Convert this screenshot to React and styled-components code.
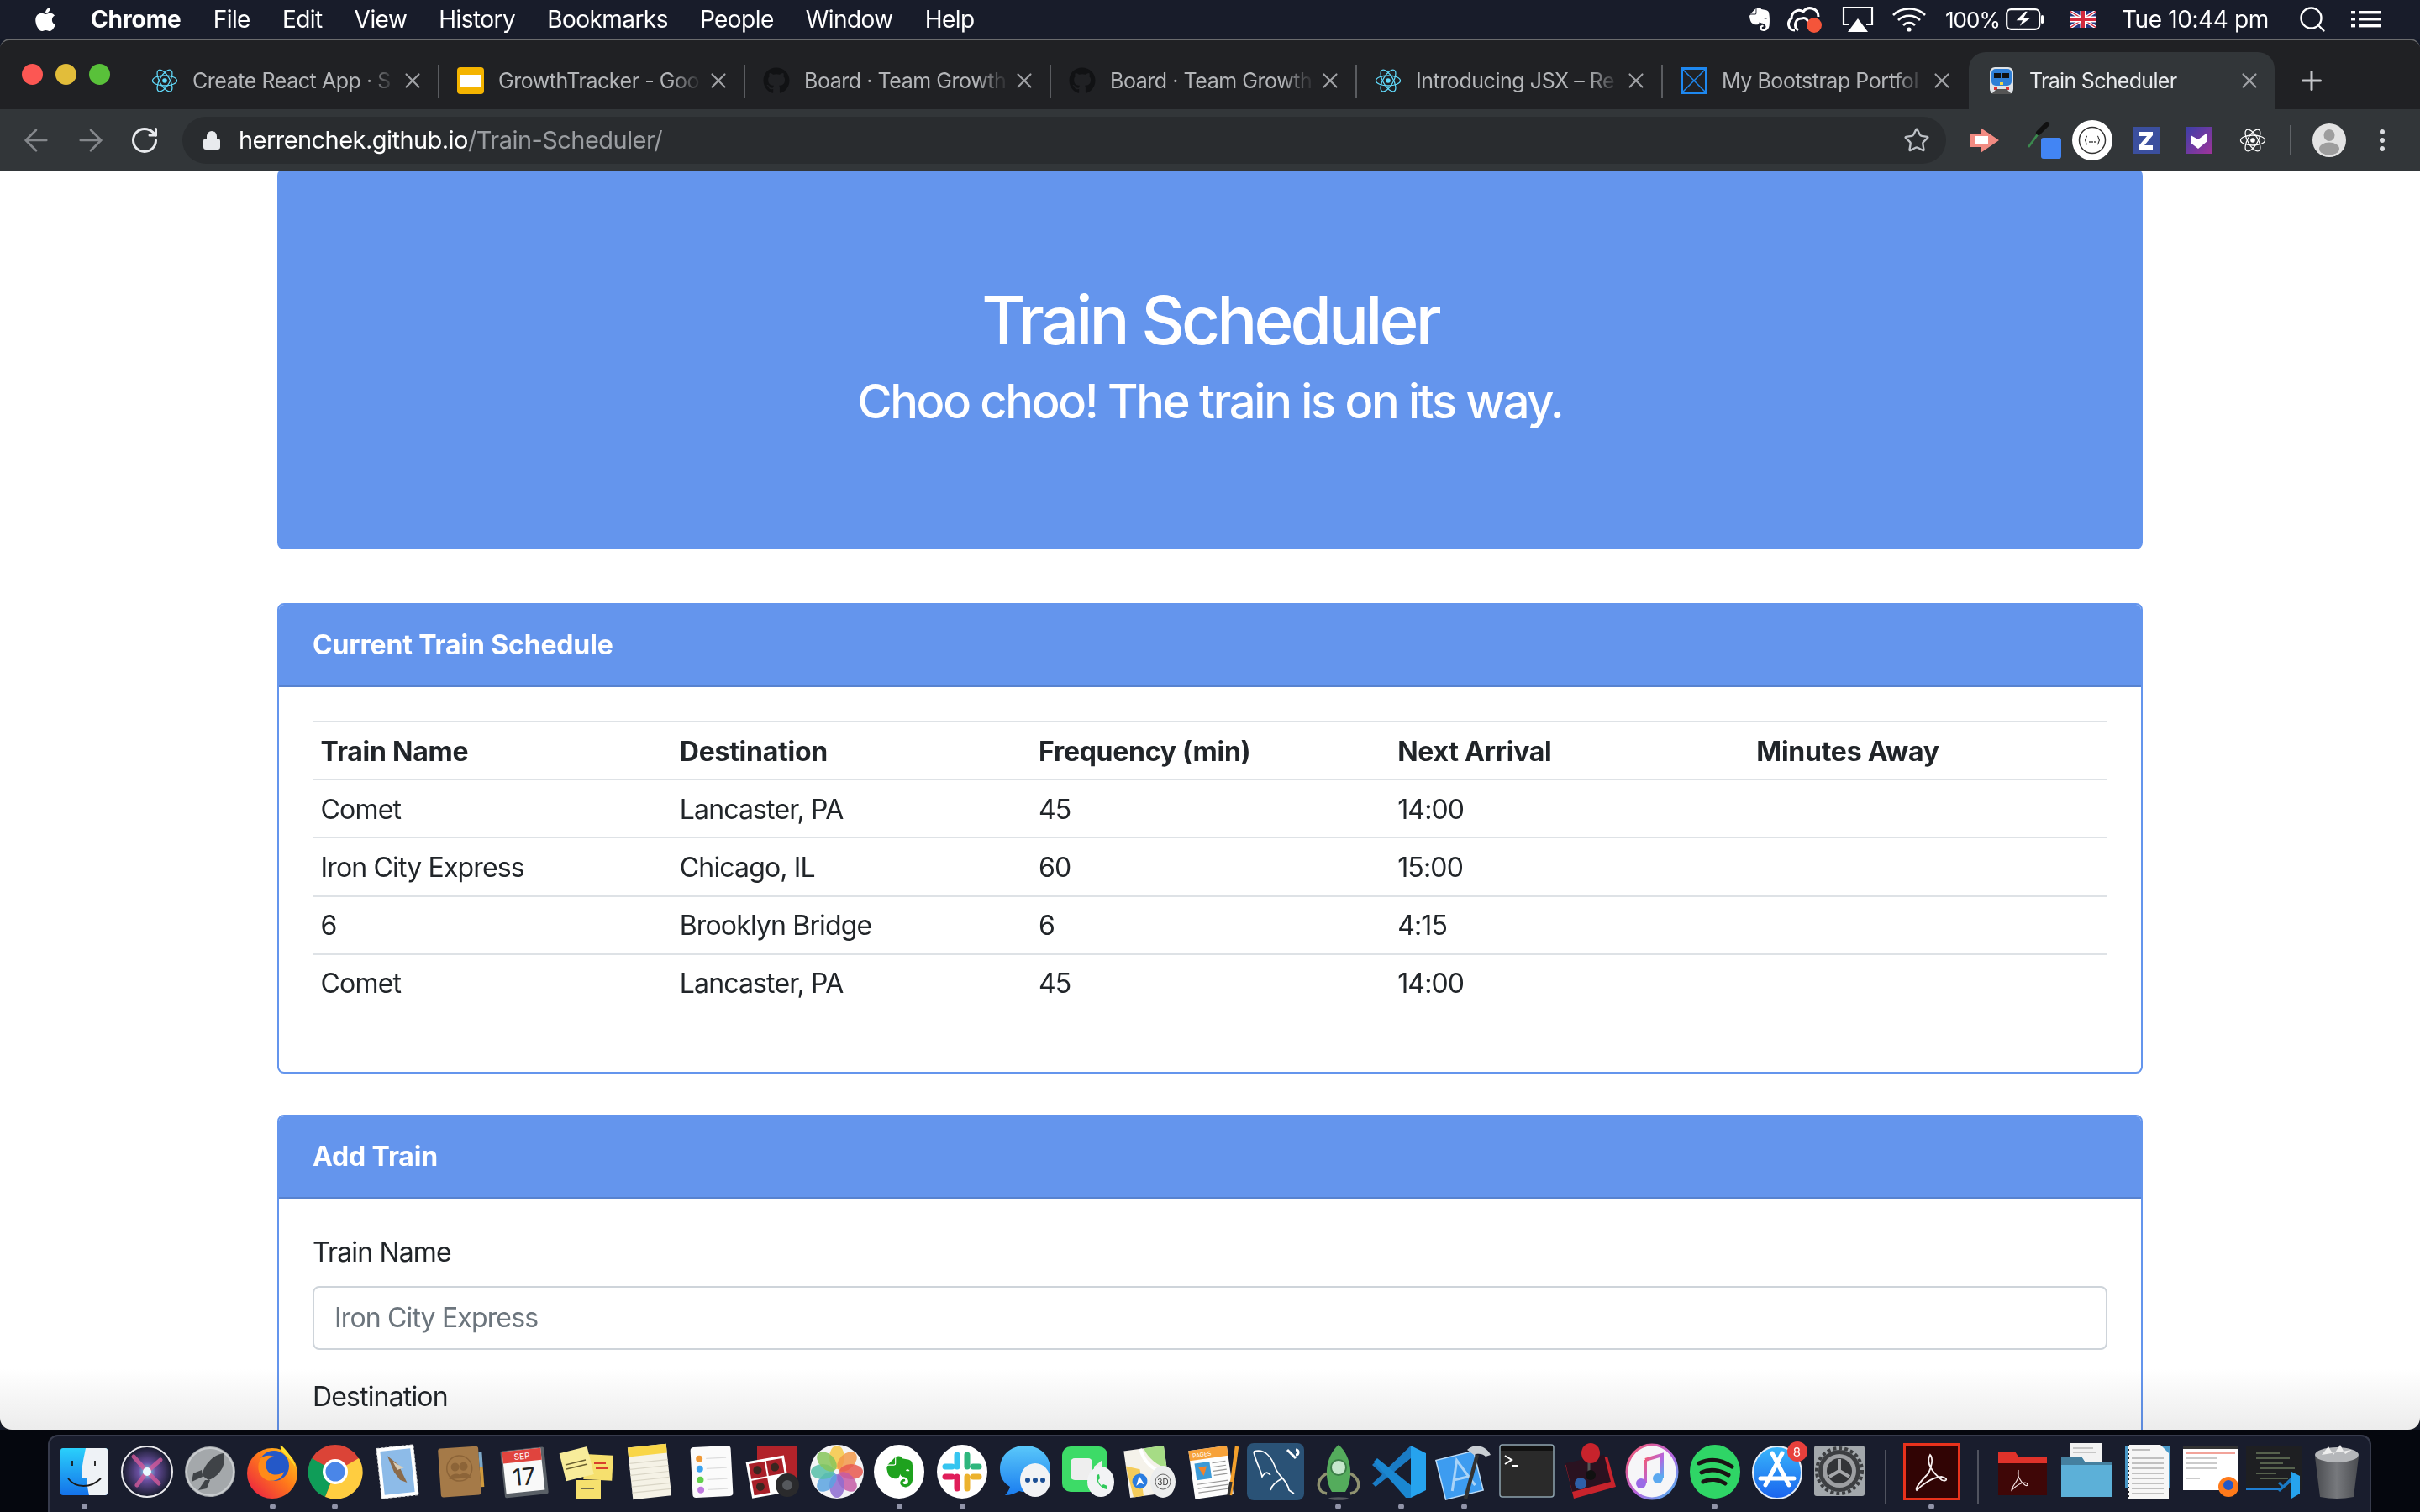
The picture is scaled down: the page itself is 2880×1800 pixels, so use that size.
import React from "react";
import styled, { createGlobalStyle } from "styled-components";
import { ArrowLeft, ArrowRight, RotateCw, Star, X, Plus, Search, Lock } from "lucide-react";
import { FaApple, FaGithub, FaEvernote } from "react-icons/fa";

const BLUE = "#6495ed";

const GlobalStyle = createGlobalStyle`
  html, body { margin: 0; padding: 0; background: #141927; }
  body { font-family: Inter, "Liberation Sans", sans-serif; color: #212529; width: 2880px; height: 1800px; overflow: hidden; }
  * { box-sizing: border-box; }
`;

/* ---------- small drawings ---------- */

const ReactLogo = ({ size = 32, color = "#61dafb" }) => (
  <svg width={size} height={size} viewBox="0 0 32 32" fill="none" stroke={color} strokeWidth="1.3">
    <ellipse cx="16" cy="16" rx="14.5" ry="6" />
    <ellipse cx="16" cy="16" rx="14.5" ry="6" transform="rotate(60 16 16)" />
    <ellipse cx="16" cy="16" rx="14.5" ry="6" transform="rotate(120 16 16)" />
    <circle cx="16" cy="16" r="2.8" fill={color} stroke="none" />
  </svg>
);

const SlidesFav = () => (
  <svg width="32" height="32" viewBox="0 0 32 32">
    <rect width="32" height="32" rx="4" fill="#f4b400" />
    <rect x="4" y="9" width="24" height="14" fill="#fff" />
  </svg>
);

const PortfolioFav = () => (
  <svg width="32" height="32" viewBox="0 0 32 32" fill="none" stroke="#1e88f0">
    <rect x="1.5" y="1.5" width="29" height="29" strokeWidth="3" />
    <path d="M2 2 L30 30 M30 2 L2 30" strokeWidth="1.5" />
  </svg>
);

const TrainFav = () => (
  <svg width="32" height="34" viewBox="0 0 32 34">
    <rect x="2" y="1" width="28" height="32" rx="6" fill="#dfe3e6" />
    <rect x="4" y="3" width="24" height="20" rx="5" fill="#2f7fd6" />
    <rect x="7" y="8" width="8" height="6" fill="#111" />
    <rect x="17" y="8" width="8" height="6" fill="#111" />
    <rect x="7" y="25" width="4" height="3" fill="#d33" />
    <rect x="21" y="25" width="4" height="3" fill="#d33" />
    <rect x="14" y="19" width="4" height="3" fill="#f0d84a" />
    <path d="M4 33 L10 27 H22 L28 33 Z" fill="#555" />
  </svg>
);

const CloudStatus = () => (
  <svg width="44" height="34" viewBox="0 0 44 34" fill="none" stroke="#fff" strokeWidth="3">
    <path d="M10 30 C2 30 0 20 6 16 C6 8 14 4 20 8 C26 0 38 4 38 14" />
    <path d="M14 30 C8 26 10 16 18 16 C24 14 28 20 26 28" />
    <circle cx="33" cy="24" r="9" fill="#f4553a" stroke="none" />
  </svg>
);

const AirplayStatus = () => (
  <svg width="38" height="32" viewBox="0 0 38 32">
    <path d="M9 22 H2 V2 H36 V22 H29" fill="none" stroke="#fff" strokeWidth="2.2" />
    <path d="M19 15 L31 31 H7 Z" fill="#fff" />
  </svg>
);

const WifiStatus = () => (
  <svg width="42" height="30" viewBox="0 0 42 30" fill="none" stroke="#fff" strokeWidth="2.6">
    <path d="M2 10 C12 0 30 0 40 10" />
    <path d="M8 16 C15 9 27 9 34 16" />
    <path d="M14 22 C18 18 24 18 28 22" />
    <circle cx="21" cy="27" r="2.6" fill="#fff" stroke="none" />
  </svg>
);

const BatteryStatus = () => (
  <svg width="46" height="26" viewBox="0 0 46 26">
    <rect x="1.2" y="1.2" width="39" height="23.6" rx="5" fill="none" stroke="#fff" strokeWidth="2.2" />
    <rect x="42" y="8" width="3" height="10" rx="1.5" fill="#fff" />
    <path d="M23 3 L11 15 H19 L15 23 L31 11 H22 L27 3 Z" fill="#fff" stroke="#1a1e2c" strokeWidth="1.4" />
  </svg>
);

const FlagStatus = () => (
  <svg width="32" height="20" viewBox="0 0 32 20">
    <rect width="32" height="20" fill="#24357d" />
    <path d="M0 0 L32 20 M32 0 L0 20" stroke="#fff" strokeWidth="4" />
    <path d="M0 0 L32 20 M32 0 L0 20" stroke="#d3293d" strokeWidth="1.4" />
    <path d="M16 0 V20 M0 10 H32" stroke="#fff" strokeWidth="7" />
    <path d="M16 0 V20 M0 10 H32" stroke="#d3293d" strokeWidth="4" />
  </svg>
);

const ListStatus = () => (
  <svg width="36" height="20" viewBox="0 0 36 20" fill="#fff">
    <rect y="0" width="5" height="3.4" /><rect x="9" y="0" width="27" height="3.4" />
    <rect y="8" width="5" height="3.4" /><rect x="9" y="8" width="27" height="3.4" />
    <rect y="16" width="5" height="3.4" /><rect x="9" y="16" width="27" height="3.4" />
  </svg>
);

const RecExt = () => (
  <svg width="34" height="30" viewBox="0 0 34 30">
    <path d="M12 0 L34 15 L12 30 V23 H0 V7 H12 Z" fill="#f28b82" />
    <rect x="5" y="10" width="16" height="10" fill="#fff" />
  </svg>
);

const DropperExt = () => (
  <svg width="44" height="44" viewBox="0 0 44 44">
    <path d="M3 30 L17 11" stroke="#3b8a4e" strokeWidth="2.6" />
    <path d="M15 13 L25 3" stroke="#111" strokeWidth="6" strokeLinecap="round" />
    <rect x="18" y="19" width="24" height="25" rx="3" fill="#4285f4" />
  </svg>
);

const JsonExt = () => (
  <svg width="48" height="48" viewBox="0 0 48 48">
    <circle cx="24" cy="24" r="24" fill="#fff" />
    <circle cx="24" cy="24" r="15.5" fill="none" stroke="#333" strokeWidth="1.5" />
    <path d="M18 19 C16 19 17 24 15 24 C17 24 16 29 18 29 M30 19 C32 19 31 24 33 24 C31 24 32 29 30 29" fill="none" stroke="#333" strokeWidth="1.2" />
    <circle cx="21" cy="26" r="0.9" fill="#333" /><circle cx="24" cy="26" r="0.9" fill="#333" /><circle cx="27" cy="26" r="0.9" fill="#333" />
  </svg>
);

const ZExt = () => (
  <svg width="32" height="32" viewBox="0 0 32 32">
    <rect width="32" height="32" fill="#3b4f9e" />
    <path d="M8 6 H24 V10 L14 22 H24 V27 H7 V23 L17 11 H8 Z" fill="#fff" />
  </svg>
);

const CheckExt = () => (
  <svg width="32" height="32" viewBox="0 0 32 32">
    <defs>
      <linearGradient id="chk" x1="0" x2="1" y1="0" y2="1">
        <stop offset="0" stopColor="#3b3fa8" /><stop offset="1" stopColor="#a0349a" />
      </linearGradient>
    </defs>
    <rect width="32" height="32" fill="url(#chk)" />
    <path d="M6 10 L15 15 L26 7 V17 L15 26 L6 19 Z" fill="#fff" />
  </svg>
);

const Avatar = () => (
  <svg width="40" height="40" viewBox="0 0 40 40">
    <circle cx="20" cy="20" r="20" fill="#e3e3e3" />
    <ellipse cx="20" cy="14" rx="6.5" ry="7" fill="#9e9e9e" />
    <ellipse cx="20" cy="30" rx="12" ry="7.5" fill="#9e9e9e" />
  </svg>
);

const Dots = () => (
  <svg width="8" height="28" viewBox="0 0 8 28" fill="#dadce0">
    <circle cx="4" cy="4" r="3" /><circle cx="4" cy="14" r="3" /><circle cx="4" cy="24" r="3" />
  </svg>
);

/* ---------- dock drawings, all on a 68 box ---------- */

const Icon = ({ children }) => (
  <svg width="68" height="68" viewBox="0 0 68 68">{children}</svg>
);

const Finder = () => (
  <Icon>
    <defs>
      <linearGradient id="fd" x1="0" x2="0" y1="0" y2="1"><stop offset="0" stopColor="#2ad0fb" /><stop offset="1" stopColor="#1472ea" /></linearGradient>
    </defs>
    <rect x="6" y="6" width="56" height="56" rx="3" fill="url(#fd)" />
    <path d="M36 6 H59 Q62 6 62 9 V59 Q62 62 59 62 H40 C38 52 37 46 38 42 H31 C31 28 34 16 36 6 Z" fill="#eef2f6" />
    <path d="M20 21 V27 M47 21 V27" stroke="#1a1a1a" strokeWidth="1.8" />
    <path d="M15 42 C24 54 42 54 54 42" fill="none" stroke="#1a1a1a" strokeWidth="1.8" />
  </Icon>
);

const Siri = () => (
  <Icon>
    <defs>
      <radialGradient id="si"><stop offset="0" stopColor="#7fe7f5" /><stop offset="0.35" stopColor="#6a4fa0" /><stop offset="1" stopColor="#151a2a" /></radialGradient>
    </defs>
    <circle cx="34" cy="34" r="30" fill="url(#si)" stroke="#e8e8ec" strokeWidth="2" />
    <path d="M34 34 L18 16 M34 34 L50 20 M34 34 L22 50 M34 34 L48 48" stroke="#d45a9b" strokeWidth="5" strokeLinecap="round" opacity="0.8" />
    <circle cx="34" cy="34" r="5" fill="#e9fbff" />
  </Icon>
);

const Launchpad = () => (
  <Icon>
    <circle cx="34" cy="34" r="30" fill="#a4a8ab" />
    <circle cx="34" cy="34" r="28" fill="none" stroke="#c9cccf" strokeWidth="2" />
    <path d="M50 12 C38 14 28 24 24 38 L32 44 C44 40 54 28 50 12 Z" fill="#3f4347" />
    <path d="M24 32 L14 36 L12 46 L25 40 Z M34 44 L30 54 L20 56 L28 44 Z" fill="#3f4347" />
  </Icon>
);

const Firefox = () => (
  <Icon>
    <defs>
      <linearGradient id="ff" x1="0" x2="1" y1="1" y2="0"><stop offset="0" stopColor="#e8134a" /><stop offset="0.55" stopColor="#ff7a1a" /><stop offset="1" stopColor="#ffd11c" /></linearGradient>
    </defs>
    <circle cx="34" cy="36" r="30" fill="url(#ff)" />
    <path d="M44 2 C42 10 52 14 60 26 C64 34 60 16 44 2 Z" fill="#ffde2e" />
    <circle cx="36" cy="27" r="18" fill="#2458c8" />
    <path d="M20 18 C28 12 36 16 36 16 C26 18 24 26 28 32 C32 40 44 38 48 34 C46 44 32 48 24 42 C16 36 16 26 20 18 Z" fill="#ff8b18" />
  </Icon>
);

const Chrome = () => (
  <Icon>
    <circle cx="34" cy="34" r="32" fill="#db4437" />
    <path d="M34 34 L6 18 A32 32 0 0 0 22 64 Z" fill="#0f9d58" />
    <path d="M34 34 L62 18 A32 32 0 0 1 22 64 Z" fill="#ffcd40" />
    <circle cx="34" cy="34" r="15" fill="#fff" />
    <circle cx="34" cy="34" r="11.5" fill="#4a86e8" />
  </Icon>
);

const Mail = () => (
  <Icon>
    <g transform="rotate(-6 34 34)">
      <rect x="12" y="4" width="44" height="60" fill="#fff" stroke="#ddd" strokeDasharray="3 2" />
      <rect x="16" y="8" width="36" height="52" fill="#8dbbe8" />
      <path d="M24 14 L36 26 L44 48 L36 44 L30 34 Z" fill="#8a6a4a" />
      <path d="M30 22 L42 30 L34 32 Z" fill="#d8cdb8" />
    </g>
  </Icon>
);

const Contacts = () => (
  <Icon>
    <g transform="rotate(-4 34 34)">
      <rect x="9" y="5" width="48" height="58" rx="3" fill="#a57a48" />
      <rect x="57" y="12" width="4" height="18" fill="#7da9c9" /><rect x="57" y="30" width="4" height="24" fill="#d09a3d" />
      <circle cx="33" cy="30" r="15" fill="none" stroke="#8c6438" strokeWidth="1.5" />
      <circle cx="28" cy="28" r="5" fill="#8c6438" /><circle cx="38" cy="28" r="5" fill="#8c6438" />
      <path d="M20 42 C22 34 34 34 36 42 Z M30 42 C32 34 44 34 46 42 Z" fill="#8c6438" />
    </g>
  </Icon>
);

const Calendar = () => (
  <Icon>
    <g transform="rotate(-6 34 34)">
      <rect x="9" y="7" width="52" height="56" rx="2" fill="#5a6067" />
      <rect x="11" y="8" width="46" height="50" fill="#f9f9f9" />
      <rect x="11" y="8" width="46" height="14" fill="#e0443e" />
      <text x="34" y="19" fontFamily="Inter, sans-serif" fontSize="10" fill="#fff" textAnchor="middle">SEP</text>
      <text x="34" y="50" fontFamily="Inter, sans-serif" fontSize="28" fill="#222" textAnchor="middle">17</text>
    </g>
  </Icon>
);

const Stickies = () => (
  <Icon>
    <rect x="32" y="14" width="34" height="30" fill="#f6e06e" transform="rotate(3 50 30)" />
    <rect x="22" y="44" width="30" height="22" fill="#f6e06e" />
    <rect x="6" y="8" width="34" height="34" fill="#f8ec9a" transform="rotate(-14 22 24)" />
    <path d="M10 26 L34 20 M11 31 L36 25" stroke="#6a6030" strokeWidth="1.5" />
    <path d="M44 24 H58 M46 30 H60" stroke="#d8402c" strokeWidth="2" />
    <path d="M28 54 H44" stroke="#444" strokeWidth="1.5" />
  </Icon>
);

const Notes = () => (
  <Icon>
    <g transform="rotate(-6 34 34)">
      <rect x="12" y="3" width="46" height="62" fill="#f5f2e6" />
      <rect x="12" y="3" width="46" height="11" fill="#f9d648" />
      <path d="M12 22 H58 M12 29 H58 M12 36 H58 M12 43 H58 M12 50 H58 M12 57 H58" stroke="#d9d5c6" strokeWidth="1.2" />
    </g>
  </Icon>
);

const Reminders = () => (
  <Icon>
    <g transform="rotate(-3 34 34)">
      <rect x="10" y="4" width="48" height="60" rx="4" fill="#fbfbfb" />
      <circle cx="20" cy="18" r="4" fill="#f09a37" /><circle cx="20" cy="30" r="4" fill="#3aa3f0" />
      <circle cx="20" cy="43" r="4" fill="#62d04c" /><circle cx="20" cy="55" r="4" fill="#c07ae0" />
      <path d="M28 18 H52 M28 30 H52 M28 43 H52 M28 55 H52" stroke="#ddd" strokeWidth="1.2" />
    </g>
  </Icon>
);

const PhotoBooth = () => (
  <Icon>
    <rect x="14" y="4" width="48" height="48" fill="#b2232a" />
    <g transform="rotate(-10 28 40)">
      <rect x="4" y="18" width="46" height="44" fill="#fff" />
      <rect x="7" y="21" width="19" height="18" fill="#a81f28" /><rect x="28" y="21" width="19" height="18" fill="#a81f28" />
      <rect x="7" y="41" width="19" height="18" fill="#a81f28" />
      <circle cx="16" cy="30" r="5" fill="#3a2620" /><circle cx="37" cy="30" r="5" fill="#3a2620" /><circle cx="16" cy="50" r="5" fill="#3a2620" />
    </g>
    <circle cx="50" cy="50" r="14" fill="#2a2a2c" /><circle cx="50" cy="50" r="6" fill="#55585c" />
  </Icon>
);

const Photos = () => (
  <Icon>
    <circle cx="34" cy="34" r="32" fill="#f4f4f6" />
    {["#f6c744", "#f2994a", "#e8584f", "#c45aa6", "#8d6bd0", "#5aa3e0", "#56c0a8", "#86c55a"].map((c, i) => (
      <ellipse key={c} cx="34" cy="17" rx="9" ry="14" fill={c} opacity="0.85" transform={`rotate(${i * 45} 34 34)`} />
    ))}
  </Icon>
);

const Evernote = () => (
  <Icon>
    <ellipse cx="34" cy="34" rx="30" ry="32" fill="#fff" />
    <FaEvernote x="14" y="13" size="42" color="#1ea21e" />
  </Icon>
);

const Slack = () => (
  <Icon>
    <ellipse cx="34" cy="34" rx="30" ry="32" fill="#fff" />
    <path d="M28 14 V28 M14 28 H22" stroke="#36c5f0" strokeWidth="7" strokeLinecap="round" />
    <path d="M40 14 V28 M54 28 H47" stroke="#2eb67d" strokeWidth="7" strokeLinecap="round" />
    <path d="M40 54 V40 M54 40 H47" stroke="#ecb22e" strokeWidth="7" strokeLinecap="round" />
    <path d="M28 54 V40 M14 40 H22" stroke="#e01e5a" strokeWidth="7" strokeLinecap="round" />
  </Icon>
);

const Messages = () => (
  <Icon>
    <defs>
      <linearGradient id="ms" x1="0" x2="0" y1="0" y2="1"><stop offset="0" stopColor="#5ac8fa" /><stop offset="1" stopColor="#1a7df0" /></linearGradient>
    </defs>
    <path d="M34 3 C16 3 4 15 4 31 C4 41 9 48 16 52 C15 56 12 60 10 62 C16 62 22 60 27 57 C29 58 32 58 34 58 C52 58 64 46 64 31 C64 15 52 3 34 3 Z" fill="url(#ms)" />
    <ellipse cx="46" cy="44" rx="18" ry="20" fill="#f2f3f5" />
    <circle cx="37" cy="44" r="3" fill="#1c4f95" /><circle cx="46" cy="44" r="3" fill="#1c4f95" /><circle cx="55" cy="44" r="3" fill="#1c4f95" />
  </Icon>
);

const FaceTime = () => (
  <Icon>
    <rect x="4" y="4" width="54" height="54" rx="10" fill="#3ddb67" />
    <rect x="14" y="18" width="26" height="26" rx="5" fill="#eee" />
    <path d="M42 28 L52 20 V42 L42 34 Z" fill="#eee" />
    <ellipse cx="50" cy="46" rx="16" ry="18" fill="#f2f3f5" />
    <path d="M45 38 C44 46 50 54 57 55 L58 51 L53 49 L51 51 C49 49 47 46 47 44 L49 42 L48 37 Z" fill="#2fc95a" />
  </Icon>
);

const Maps = () => (
  <Icon>
    <g transform="rotate(-8 30 34)">
      <rect x="6" y="6" width="48" height="56" fill="#f5f2ea" />
      <path d="M30 6 H54 V34 C44 28 34 20 30 6 Z" fill="#a6dc85" />
      <path d="M6 24 L22 30 V62 H10 Z" fill="#f4cc5a" />
      <path d="M26 6 C28 24 38 34 54 40" fill="none" stroke="#fff" strokeWidth="4" />
      <circle cx="20" cy="44" r="9" fill="#2a7de0" />
      <path d="M20 38 L25 49 L20 46 L15 49 Z" fill="#fff" />
    </g>
    <ellipse cx="49" cy="46" rx="15" ry="19" fill="#eceded" />
    <circle cx="49" cy="46" r="9" fill="none" stroke="#666" strokeWidth="1" />
    <text x="49" y="50" fontFamily="Inter, sans-serif" fontSize="10" fill="#333" textAnchor="middle">3D</text>
  </Icon>
);

const Pages = () => (
  <Icon>
    <g transform="rotate(-8 30 34)">
      <rect x="8" y="6" width="46" height="58" fill="#fdfdfd" />
      <rect x="8" y="6" width="46" height="12" fill="#f7a23a" />
      <text x="12" y="15" fontFamily="Inter, sans-serif" fontSize="7" fill="#fff">PAGES</text>
      <rect x="13" y="22" width="18" height="20" fill="#3b9ad8" />
      <path d="M17 27 L27 27 L22 38 Z" fill="#f4832a" />
      <path d="M34 24 H50 M34 29 H50 M34 34 H50 M34 39 H50 M13 47 H50 M13 52 H50 M13 57 H50" stroke="#999" strokeWidth="1.2" />
    </g>
    <path d="M54 62 L62 4" stroke="#f4a02c" strokeWidth="4.5" />
    <path d="M52 62 L55 46" stroke="#333" strokeWidth="3.5" />
  </Icon>
);

const MySql = () => (
  <Icon>
    <rect x="0" y="0" width="68" height="68" rx="8" fill="#2a5276" />
    <path d="M8 10 C22 6 30 18 34 30 C38 40 48 44 50 56 L56 60 M8 10 C10 22 16 30 18 40 C22 34 24 34 28 38 M42 42 C38 44 30 48 28 56" fill="none" stroke="#fff" strokeWidth="1.7" />
    <path d="M48 8 L58 18 M58 8 C62 8 62 14 58 14" stroke="#fff" strokeWidth="3" fill="none" />
  </Icon>
);

const RocketSim = () => (
  <Icon>
    <path d="M34 2 C50 16 52 42 42 58 H26 C16 42 18 16 34 2 Z" fill="#54ac5c" />
    <circle cx="34" cy="29" r="9" fill="#c6e8cd" stroke="#3c7f48" strokeWidth="2" />
    <path d="M20 36 C6 44 8 58 20 60 M48 36 C62 44 60 58 48 60" fill="none" stroke="#8f9270" strokeWidth="3.5" />
    <ellipse cx="34" cy="66" rx="12" ry="1.8" fill="#565a60" />
  </Icon>
);

const VsCode = () => (
  <Icon>
    <path d="M46 3 L64 12 V56 L46 65 Z" fill="#26a3ee" />
    <path d="M46 3 L16 32 L4 22 L0 26 L12 37 L0 48 L4 52 L46 18 Z" fill="#1a7bc4" />
    <path d="M6 18 L2 22 L40 65 L46 65 L46 50 Z" fill="#1a87d1" />
  </Icon>
);

const Xcode = () => (
  <Icon>
    <g transform="rotate(-14 30 38)">
      <rect x="6" y="14" width="46" height="48" fill="#3d9cf0" stroke="#bcdcf8" strokeWidth="1.5" />
      <path d="M16 54 L30 20 L44 54 M22 42 H38" fill="none" stroke="#a9d4f8" strokeWidth="3" />
    </g>
    <path d="M36 66 L50 14" stroke="#333" strokeWidth="4.5" />
    <path d="M38 8 C46 0 60 2 66 14 L60 16 C56 12 50 12 46 14 Z" fill="#c9ced3" />
  </Icon>
);

const Terminal = () => (
  <Icon>
    <rect x="2" y="2" width="64" height="62" rx="3" fill="#2a2a2a" stroke="#8da2ad" strokeWidth="1.5" />
    <rect x="3" y="3" width="62" height="6" fill="#111" />
    <path d="M8 15 L16 20 L8 25" fill="none" stroke="#fff" strokeWidth="2" />
    <path d="M16 27 H24" stroke="#fff" strokeWidth="2" />
  </Icon>
);

const Joystick = () => (
  <Icon>
    <path d="M6 26 L56 16 L66 52 L16 66 Z" fill="#c8232c" />
    <path d="M6 24 L52 14 L60 46 L14 58 Z" fill="#2a1220" />
    <path d="M34 20 V38" stroke="#555" strokeWidth="3" />
    <ellipse cx="36" cy="12" rx="11" ry="12" fill="#c8232c" />
    <circle cx="24" cy="48" r="7" fill="#2e5fa8" />
    <circle cx="36" cy="38" r="6" fill="#111" />
  </Icon>
);

const ITunes = () => (
  <Icon>
    <defs>
      <linearGradient id="it" x1="0" x2="1" y1="0" y2="1"><stop offset="0" stopColor="#f8596a" /><stop offset="0.55" stopColor="#b565e0" /><stop offset="1" stopColor="#40bdf4" /></linearGradient>
    </defs>
    <ellipse cx="34" cy="34" rx="30" ry="32" fill="#f6f6f8" stroke="url(#it)" strokeWidth="3" />
    <path d="M26 20 L46 14 V42 M26 20 V48" stroke="url(#it)" strokeWidth="4" fill="none" />
    <circle cx="21" cy="48" r="6" fill="#9a6be6" /><circle cx="41" cy="42" r="6" fill="#5ca9f0" />
  </Icon>
);

const Spotify = () => (
  <Icon>
    <ellipse cx="34" cy="34" rx="30" ry="32" fill="#2fd566" />
    <path d="M15 24 C28 18 42 20 54 28 M18 35 C28 30 40 32 50 38 M20 46 C28 42 38 43 46 48" fill="none" stroke="#191414" strokeWidth="5" strokeLinecap="round" />
  </Icon>
);

const AppStore = () => (
  <Icon>
    <defs>
      <linearGradient id="as" x1="0" x2="0" y1="0" y2="1"><stop offset="0" stopColor="#38b6fb" /><stop offset="1" stopColor="#1a63ee" /></linearGradient>
    </defs>
    <ellipse cx="34" cy="35" rx="29" ry="31" fill="url(#as)" stroke="#e6edf5" strokeWidth="2" />
    <path d="M40 12 L20 50 M28 12 L48 50 M14 42 H54" stroke="#fff" strokeWidth="5" strokeLinecap="round" />
  </Icon>
);

const SysPrefs = () => (
  <Icon>
    <rect x="3" y="3" width="60" height="60" rx="3" fill="#a3a8ac" />
    <circle cx="33" cy="33" r="25" fill="#3d3f42" />
    <circle cx="33" cy="33" r="27" fill="none" stroke="#3d3f42" strokeWidth="4" strokeDasharray="4 3" />
    <circle cx="33" cy="33" r="20" fill="#9d9fa2" />
    <circle cx="33" cy="33" r="15" fill="#333538" />
    <path d="M33 33 V19 M33 33 L21 40 M33 33 L45 40" stroke="#a5a7aa" strokeWidth="4" />
  </Icon>
);

const Acrobat = () => (
  <Icon>
    <rect x="1.5" y="1.5" width="65" height="65" fill="#310404" stroke="#e8321c" strokeWidth="3" />
    <path d="M32 14 C26 24 36 36 46 44 C52 46 54 42 46 40 C34 40 20 52 16 56 C14 54 22 44 30 36 C34 28 36 18 32 14 Z" fill="none" stroke="#f6eeee" strokeWidth="1.8" />
  </Icon>
);

const AcrobatFolder = () => (
  <Icon>
    <path d="M4 10 H24 L28 16 H62 V62 H4 Z" fill="#3f0707" />
    <path d="M4 10 H24 L28 16 H62 V24 H4 Z" fill="#e0322a" />
    <path d="M28 32 C26 38 30 46 36 50 C40 52 40 48 36 47 C30 47 24 52 20 56 C20 52 28 44 28 40 Z" fill="none" stroke="#f5e5e5" strokeWidth="1.2" />
  </Icon>
);

const BlueFolder = () => (
  <Icon>
    <rect x="14" y="0" width="38" height="24" fill="#f2f2f2" />
    <path d="M18 6 H42 M18 11 H46" stroke="#999" strokeWidth="1" />
    <path d="M4 16 H28 L32 22 H64 V64 H4 Z" fill="#5cb0d8" />
    <path d="M4 16 H28 L32 22 H64 V26 H4 Z" fill="#45809f" />
  </Icon>
);

const DocStack = () => (
  <Icon>
    <path d="M6 4 H60 V54 H6 Z" fill="#4b9ac9" />
    <path d="M10 2 H48 L58 12 V66 H10 Z" fill="#f6f6f6" />
    <path d="M14 8 H36 M14 18 H52 M14 24 H52 M14 30 H52 M14 36 H52 M14 42 H52 M14 48 H52 M14 54 H52 M14 60 H52" stroke="#8a8a8a" strokeWidth="1.2" />
    <path d="M10 2 V66" stroke="#222" strokeWidth="2" strokeDasharray="2 3" />
  </Icon>
);

const BrowserThumb = () => (
  <Icon>
    <rect x="0" y="4" width="66" height="52" fill="#fff" />
    <rect x="0" y="4" width="66" height="3" fill="#333" />
    <rect x="4" y="10" width="58" height="3" fill="#f2a39a" />
    <path d="M4 18 H40 M4 24 H40 M4 30 H40 M4 42 H20" stroke="#bbb" strokeWidth="1.5" />
    <circle cx="54" cy="52" r="12" fill="#ff7a1a" /><circle cx="54" cy="50" r="6" fill="#2458c8" />
  </Icon>
);

const EditorThumb = () => (
  <Icon>
    <rect x="0" y="4" width="66" height="52" fill="#1e1f22" />
    <rect x="0" y="54" width="40" height="2" fill="#1f7ed0" />
    <path d="M12 12 H40 M12 18 H52 M16 24 H44 M16 30 H58 M12 36 H36 M16 42 H50" stroke="#6a7a5c" strokeWidth="1.3" />
    <path d="M54 34 L64 39 V60 L54 66 Z" fill="#26a3ee" />
    <path d="M54 40 L44 50 L40 46 L38 48 L42 52 L38 56 L40 58 L54 46 Z" fill="#1a7bc4" />
  </Icon>
);

const Trash = () => (
  <Icon>
    <defs>
      <linearGradient id="tr" x1="0" x2="1" y1="0" y2="0"><stop offset="0" stopColor="#4a4c50" /><stop offset="0.5" stopColor="#77797d" /><stop offset="1" stopColor="#4a4c50" /></linearGradient>
    </defs>
    <path d="M8 16 H60 L54 64 Q34 68 14 64 Z" fill="url(#tr)" />
    <ellipse cx="34" cy="14" rx="26" ry="9" fill="#b5b7ba" />
    <path d="M16 14 L24 4 L30 14 L38 2 L44 13 L52 8" fill="#eee" />
  </Icon>
);

/* ---------- data ---------- */

const menus = ["File", "Edit", "View", "History", "Bookmarks", "People", "Window", "Help"];

const tabs = [
  { title: "Create React App · S", icon: <ReactLogo /> },
  { title: "GrowthTracker - Goo", icon: <SlidesFav /> },
  { title: "Board · Team Growth", icon: <FaGithub size={32} color="#111214" /> },
  { title: "Board · Team Growth", icon: <FaGithub size={32} color="#111214" /> },
  { title: "Introducing JSX – Re", icon: <ReactLogo /> },
  { title: "My Bootstrap Portfol", icon: <PortfolioFav />, last: true },
];

const dockApps = [
  { Art: Finder, on: true }, { Art: Siri }, { Art: Launchpad }, { Art: Firefox, on: true }, { Art: Chrome, on: true },
  { Art: Mail }, { Art: Contacts }, { Art: Calendar }, { Art: Stickies }, { Art: Notes }, { Art: Reminders },
  { Art: PhotoBooth }, { Art: Photos }, { Art: Evernote, on: true }, { Art: Slack, on: true }, { Art: Messages },
  { Art: FaceTime }, { Art: Maps }, { Art: Pages }, { Art: MySql }, { Art: RocketSim, on: true }, { Art: VsCode, on: true },
  { Art: Xcode, on: true }, { Art: Terminal }, { Art: Joystick }, { Art: ITunes }, { Art: Spotify, on: true },
  { Art: AppStore, badge: "8" }, { Art: SysPrefs },
];

const dockDocs = [AcrobatFolder, BlueFolder, DocStack, BrowserThumb, EditorThumb, Trash];

const trains = [
  ["Comet", "Lancaster, PA", "45", "14:00"],
  ["Iron City Express", "Chicago, IL", "60", "15:00"],
  ["6", "Brooklyn Bridge", "6", "4:15"],
  ["Comet", "Lancaster, PA", "45", "14:00"],
];

/* ---------- component ---------- */

const App = () => (
  <>
    <GlobalStyle />
    <Screen>
      <MenuBar>
        <AppleSlot><FaApple size={32} color="#fff" /></AppleSlot>
        <MenuItem $bold>Chrome</MenuItem>
        {menus.map((m) => <MenuItem key={m}>{m}</MenuItem>)}
        <StatusArea>
          <StatusSlot $w={54}><FaEvernote size={32} color="#fff" /></StatusSlot>
          <StatusSlot $w={54}><CloudStatus /></StatusSlot>
          <StatusSlot $w={72}><AirplayStatus /></StatusSlot>
          <StatusSlot $w={50}><WifiStatus /></StatusSlot>
          <BatteryText>100%</BatteryText>
          <StatusSlot $w={46}><BatteryStatus /></StatusSlot>
          <StatusSlot $w={92}><FlagStatus /></StatusSlot>
          <ClockText>Tue 10:44 pm</ClockText>
          <StatusSlot $w={80}><Search size={36} color="#fff" strokeWidth={1.6} /></StatusSlot>
          <StatusSlot $w={48}><ListStatus /></StatusSlot>
        </StatusArea>
      </MenuBar>

      <BrowserWindow>
        <TabStrip>
          <Lights>
            <Light $color="#fc5753" />
            <Light $color="#e2bd3a" />
            <Light $color="#59c13a" />
          </Lights>
          {tabs.map((t, i) => (
            <Tab key={i} $divider={!t.last}>
              <Favicon>{t.icon}</Favicon>
              <TabTitle>{t.title}</TabTitle>
              <TabClose><X size={30} strokeWidth={1.7} /></TabClose>
            </Tab>
          ))}
          <Tab $active>
            <Favicon><TrainFav /></Favicon>
            <TabTitle $active>Train Scheduler</TabTitle>
            <TabClose><X size={30} strokeWidth={1.7} /></TabClose>
          </Tab>
          <NewTab><Plus size={36} strokeWidth={2} /></NewTab>
        </TabStrip>

        <Toolbar>
          <ToolSlot $w={65} $dim><ArrowLeft size={42} strokeWidth={1.5} /></ToolSlot>
          <ToolSlot $w={65} $dim><ArrowRight size={42} strokeWidth={1.5} /></ToolSlot>
          <ToolSlot $w={64}><RotateCw size={36} strokeWidth={2} /></ToolSlot>
          <UrlBar>
            <Lock size={24} fill="#e8eaed" color="#e8eaed" strokeWidth={2} />
            <UrlText>herrenchek.github.io<UrlPath>/Train-Scheduler/</UrlPath></UrlText>
            <UrlStar><Star size={32} strokeWidth={1.8} /></UrlStar>
          </UrlBar>
          <ToolSlot $w={92}><RecExt /></ToolSlot>
          <ToolSlot $w={50}><DropperExt /></ToolSlot>
          <ToolSlot $w={64}><JsonExt /></ToolSlot>
          <ToolSlot $w={64}><ZExt /></ToolSlot>
          <ToolSlot $w={62}><CheckExt /></ToolSlot>
          <ToolSlot $w={66}><ReactLogo size={32} color="#fff" /></ToolSlot>
          <ToolSep />
          <ToolSlot $w={90}><Avatar /></ToolSlot>
          <ToolSlot $w={36}><Dots /></ToolSlot>
        </Toolbar>

        <Page>
          <Container>
            <Jumbotron>
              <Title>Train Scheduler</Title>
              <Lead>Choo choo! The train is on its way.</Lead>
            </Jumbotron>

            <Card $gap>
              <CardHeader>Current Train Schedule</CardHeader>
              <CardBody>
                <Table>
                  <thead>
                    <tr>
                      <th>Train Name</th>
                      <th>Destination</th>
                      <th>Frequency (min)</th>
                      <th>Next Arrival</th>
                      <th>Minutes Away</th>
                    </tr>
                  </thead>
                  <tbody>
                    {trains.map((row, i) => (
                      <tr key={i}>
                        {row.map((c, j) => <td key={j}>{c}</td>)}
                        <td />
                      </tr>
                    ))}
                  </tbody>
                </Table>
              </CardBody>
            </Card>

            <Card>
              <CardHeader>Add Train</CardHeader>
              <CardBody>
                <FormGroup>
                  <Label>Train Name</Label>
                  <Input placeholder="Iron City Express" readOnly />
                </FormGroup>
                <FormGroup>
                  <Label>Destination</Label>
                  <Input readOnly />
                </FormGroup>
              </CardBody>
            </Card>
          </Container>
          <DockShade />
        </Page>
      </BrowserWindow>

      <DockRow>
        <Dock>
          {dockApps.map(({ Art, on, badge }, i) => (
            <DockItem key={i}>
              <Art />
              {badge && <Badge>{badge}</Badge>}
              {on && <RunDot />}
            </DockItem>
          ))}
          <DockSep />
          <DockItem><Acrobat /><RunDot /></DockItem>
          <DockSep />
          {dockDocs.map((Art, i) => <DockItem key={i}><Art /></DockItem>)}
        </Dock>
      </DockRow>
    </Screen>
  </>
);

export default App;

/* ---------- styles ---------- */

const Screen = styled.div`
  width: 2880px;
  height: 1800px;
  display: flex;
  flex-direction: column;
  overflow: hidden;
  background: #141927;
`;

const MenuBar = styled.header`
  height: 46px;
  flex: none;
  display: flex;
  align-items: center;
  background: #181c2a;
  color: #fff;
  font-size: 28px;
  padding-left: 38px;
`;

const AppleSlot = styled.div`
  width: 70px;
  display: flex;
`;

const MenuItem = styled.span`
  margin-right: 38px;
  font-weight: ${(p) => (p.$bold ? 700 : 400)};
  letter-spacing: ${(p) => (p.$bold ? "-0.1px" : "-0.55px")};
`;

const StatusArea = styled.div`
  margin-left: auto;
  padding-right: 40px;
  display: flex;
  align-items: center;
`;

const StatusSlot = styled.div`
  width: ${(p) => p.$w}px;
  display: flex;
  justify-content: center;
  align-items: center;
`;

const BatteryText = styled.span`
  width: 90px;
  padding-left: 18px;
  font-size: 26px;
  letter-spacing: -1px;
  white-space: nowrap;
`;

const ClockText = styled.span`
  width: 187px;
  white-space: nowrap;
  letter-spacing: -0.4px;
`;

const BrowserWindow = styled.div`
  height: 1656px;
  flex: none;
  display: flex;
  flex-direction: column;
  border-radius: 12px 12px 12px 12px;
  overflow: hidden;
  background: #202124;
  border-top: 2px solid #6a6b6d;
`;

const TabStrip = styled.div`
  height: 82px;
  flex: none;
  display: flex;
  align-items: flex-end;
  background: #202124;
`;

const Lights = styled.div`
  width: 159px;
  height: 68px;
  flex: none;
  display: flex;
  gap: 15px;
  padding: 14px 0 0 26px;
`;

const Light = styled.span`
  width: 25px;
  height: 25px;
  border-radius: 50%;
  background: ${(p) => p.$color};
`;

const Tab = styled.div`
  position: relative;
  width: 364px;
  height: 68px;
  flex: none;
  display: flex;
  align-items: center;
  padding-left: ${(p) => (p.$active ? 23 : 21)}px;
  background: ${(p) => (p.$active ? "#323639" : "transparent")};
  border-radius: 20px 20px 0 0;
  ${(p) =>
    p.$divider &&
    `&::after {
      content: "";
      position: absolute;
      right: 0;
      top: 15px;
      width: 2px;
      height: 40px;
      background: #5a5c60;
    }`}
`;

const Favicon = styled.div`
  width: 32px;
  height: 34px;
  flex: none;
  display: flex;
  align-items: center;
  justify-content: center;
`;

const TabTitle = styled.span`
  width: 244px;
  margin-left: 17px;
  font-size: 25px;
  letter-spacing: ${(p) => (p.$active ? "-0.7px" : "-0.45px")};
  white-space: nowrap;
  overflow: hidden;
  color: ${(p) => (p.$active ? "#e8eaed" : "#b4b6b9")};
  ${(p) =>
    !p.$active && "mask-image: linear-gradient(to right, #000 84%, rgba(0, 0, 0, 0.15) 97%);"}
`;

const TabClose = styled.div`
  margin-left: 3px;
  display: flex;
  color: #a0a2a6;
`;

const NewTab = styled.div`
  width: 88px;
  height: 68px;
  display: flex;
  align-items: center;
  justify-content: center;
  color: #c4c6c9;
`;

const Toolbar = styled.div`
  height: 73px;
  flex: none;
  display: flex;
  align-items: center;
  padding-left: 10px;
  background: #323639;
`;

const ToolSlot = styled.div`
  width: ${(p) => p.$w}px;
  flex: none;
  display: flex;
  align-items: center;
  justify-content: center;
  color: ${(p) => (p.$dim ? "#85888c" : "#e8eaed")};
`;

const ToolSep = styled.div`
  width: 2px;
  height: 36px;
  flex: none;
  margin-left: 11px;
  background: #5f6367;
`;

const UrlBar = styled.div`
  width: 2099px;
  height: 56px;
  flex: none;
  margin-left: 13px;
  display: flex;
  align-items: center;
  padding-left: 23px;
  border-radius: 28px;
  background: #292c2f;
`;

const UrlText = styled.span`
  margin-left: 20px;
  font-size: 29px;
  letter-spacing: -0.55px;
  color: #fff;
`;

const UrlPath = styled.span`
  color: #9a9da1;
`;

const UrlStar = styled.div`
  margin-left: auto;
  margin-right: 19px;
  display: flex;
  color: #bdc1c6;
`;

const Page = styled.main`
  position: relative;
  flex: 1;
  overflow: hidden;
  background: #fff;
  border-radius: 0 0 14px 14px;
`;

const Container = styled.div`
  width: 2220px;
  margin: 0 auto;
`;

const Jumbotron = styled.section`
  margin-top: -2px;
  height: 453px;
  display: flex;
  flex-direction: column;
  align-items: center;
  padding-top: 132px;
  margin-bottom: 64px;
  background: ${BLUE};
  border-radius: 8px;
  color: #fff;
`;

const Title = styled.h1`
  margin: 0 0 16px;
  font-size: 80px;
  font-weight: 500;
  line-height: 96px;
  letter-spacing: -3.9px;
`;

const Lead = styled.p`
  margin: 0;
  font-size: 56px;
  font-weight: 500;
  line-height: 67px;
  letter-spacing: -2.3px;
`;

const Card = styled.section`
  margin-bottom: ${(p) => (p.$gap ? 49 : 0)}px;
  border: 2px solid ${BLUE};
  border-radius: 8px;
  overflow: hidden;
`;

const CardHeader = styled.h2`
  margin: 0;
  padding: 24px 40px;
  font-size: 32px;
  font-weight: 700;
  line-height: 48px;
  letter-spacing: -0.15px;
  color: #fff;
  background: ${BLUE};
  border-bottom: 2px solid rgba(0, 0, 0, 0.125);
`;

const CardBody = styled.div`
  padding: 40px;
`;

const Table = styled.table`
  width: 100%;
  margin-bottom: 32px;
  border-collapse: collapse;
  table-layout: fixed;
  font-size: 32px;
  line-height: 48px;
  letter-spacing: -0.85px;

  th,
  td {
    padding: 10.6px 9.6px 8.6px;
    text-align: left;
    border-top: 2px solid #dee2e6;
  }

  th {
    font-weight: 700;
    letter-spacing: -0.25px;
    border-bottom: 2px solid #dee2e6;
  }
`;

const FormGroup = styled.div`
  margin-bottom: 32px;
`;

const Label = styled.label`
  display: block;
  margin-bottom: 16px;
  font-size: 32px;
  line-height: 48px;
  letter-spacing: -0.85px;
`;

const Input = styled.input`
  display: block;
  width: 100%;
  height: 76px;
  padding: 12px 24px;
  font-family: inherit;
  font-size: 32px;
  letter-spacing: -0.85px;
  color: #495057;
  background: #fff;
  border: 2px solid #ced4da;
  border-radius: 8px;

  &::placeholder {
    color: #6c757d;
    opacity: 1;
  }
`;

const DockShade = styled.div`
  position: absolute;
  left: 0;
  right: 0;
  bottom: 0;
  height: 72px;
  pointer-events: none;
  mix-blend-mode: multiply;
  background: linear-gradient(to bottom, #fff, #ececec);
`;

const DockRow = styled.footer`
  flex: 1;
  padding: 6px 58px 0 57px;
  background: #05070e;
`;

const Dock = styled.nav`
  height: 100%;
  display: flex;
  align-items: flex-start;
  padding: 8px 0 0 4px;
  background: #191d2d;
  border: solid #373b4c;
  border-width: 2px 2px 0;
  border-radius: 12px 12px 0 0;
`;

const DockItem = styled.div`
  position: relative;
  width: 74.64px;
  flex: none;
  display: flex;
  justify-content: center;
`;

const DockSep = styled.div`
  width: 34.5px;
  height: 64px;
  flex: none;
  margin-top: 8px;
  background: linear-gradient(#50535f, #50535f) center / 2px 100% no-repeat;
`;

const RunDot = styled.span`
  position: absolute;
  left: 50%;
  top: 72px;
  width: 7px;
  height: 7px;
  margin-left: -3.5px;
  border-radius: 50%;
  background: #9093a8;
`;

const Badge = styled.span`
  position: absolute;
  top: -2px;
  right: 2px;
  width: 24px;
  height: 24px;
  display: flex;
  align-items: center;
  justify-content: center;
  border-radius: 50%;
  font-size: 15px;
  color: #fff;
  background: #e8403c;
`;
